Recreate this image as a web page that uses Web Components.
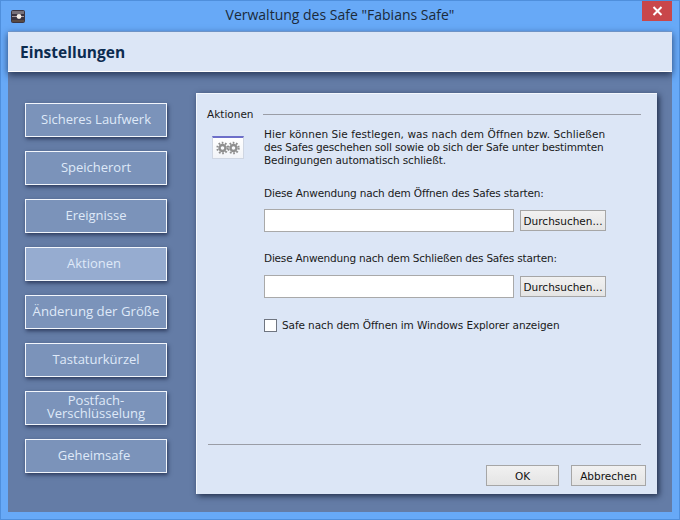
<!DOCTYPE html>
<html><head><meta charset="utf-8"><style>
html,body{margin:0;padding:0;width:680px;height:520px;overflow:hidden;background:#67a9f7}
</style></head><body>
<safe-window>
<span slot="title">Verwaltung des Safe "Fabians Safe"</span>
<span slot="heading">Einstellungen</span>
<nav-btn slot="nav">Sicheres Laufwerk</nav-btn>
<nav-btn slot="nav">Speicherort</nav-btn>
<nav-btn slot="nav">Ereignisse</nav-btn>
<nav-btn slot="nav" active style="padding-right:4px">Aktionen</nav-btn>
<nav-btn slot="nav" style="font-size:13.2px">Änderung der Größe</nav-btn>
<nav-btn slot="nav">Tastaturkürzel</nav-btn>
<nav-btn slot="nav">Postfach-<br>Verschlüsselung</nav-btn>
<nav-btn slot="nav" style="padding-right:4px">Geheimsafe</nav-btn>
<action-panel slot="panel"></action-panel>
</safe-window>
<script>
const mk=(tag,css,html)=>customElements.define(tag,class extends HTMLElement{
 connectedCallback(){if(this.shadowRoot)return;this.attachShadow({mode:'open'}).innerHTML='<style>'+css+'</style>'+html;}
});
mk('safe-window',`
:host{display:flex;flex-direction:column;width:680px;height:520px;box-sizing:border-box;border:1px solid #4f8fdc;background:#67a9f7;font-family:"Open Sans","Noto Sans",sans-serif}
.title{height:30px;display:flex;align-items:center;position:relative;flex:none}
.ticon{margin:1px 0 0 10px;width:14px;height:13px;flex:none}
.ttext{position:absolute;left:0;right:0;top:4px;text-align:center;font-size:14px;line-height:20px;color:#1b2a3a}
.close{position:absolute;right:7px;top:0;width:30px;height:20px;background:#c9474a;display:flex;align-items:center;justify-content:center}
.client{flex:1;margin:0 0 7px 7px;width:664px;display:flex;flex-direction:column;min-height:0;background:#647ca6}
.head{flex:none;height:41px;box-sizing:border-box;background:#dce6f6;border-top:1px solid #6e93c6;border-bottom:1px solid #fff;padding-left:12px;display:flex;align-items:center;font-size:15.5px;font-weight:700;color:#0c2c50;box-shadow:0 3px 7px rgba(20,35,65,.75);position:relative}
.main{flex:1;display:flex;min-height:0;padding:21px 15px 18px 17px;gap:29px}
.nav{width:142px;flex:none;display:flex;flex-direction:column;gap:14px;padding-top:10px}
`,`
<div class="title">
<svg class="ticon" viewBox="0 0 14 13"><rect width="14" height="13" rx="2" fill="#3a3440"/><rect x="1" y="1" width="12" height="3" fill="#77717a"/><rect x="1" y="6" width="12" height="1" fill="#a89aa0"/><circle cx="8" cy="6.500" r="2.400" fill="#f4efe8"/><rect x="1" y="10" width="12" height="2" fill="#5a4a42"/></svg>
<div class="ttext"><slot name="title"></slot></div>
<div class="close"><svg width="11" height="10" viewBox="0 0 11 10"><path d="M1.5 1 9.5 9M9.5 1 1.500 9" stroke="#fff" stroke-width="2"/></svg></div>
</div>
<div class="client">
<div class="head"><slot name="heading"></slot></div>
<div class="main"><div class="nav"><slot name="nav"></slot></div><slot name="panel"></slot></div>
</div>`);
mk('nav-btn',`
:host{display:flex;align-items:center;justify-content:center;text-align:center;box-sizing:border-box;width:142px;height:34px;padding-bottom:2px;border:1px solid #f2f6fc;background:#7b93ba;color:#dfe9f8;font-size:13px;line-height:13px;box-shadow:1px 2px 4px rgba(20,30,60,.7);white-space:nowrap}
:host([active]){background:#96acd0}
`,`<slot></slot>`);
mk('flat-btn',`
:host{display:flex;align-items:center;justify-content:center;box-sizing:border-box;height:21px;padding-top:1px;border:1px solid #a6a6a6;background:linear-gradient(#f1f1f1,#e4e4e4);color:#111;font:10.5px/1 "DejaVu Sans",sans-serif}
`,`<slot></slot>`);
mk('action-panel',`
:host{display:flex;flex-direction:column;flex:1;box-sizing:border-box;background:#dce6f6;box-shadow:2px 2px 6px rgba(15,25,50,.8);border-left:1px solid #f3f7fd;border-top:1px solid #f3f7fd;color:#1a1a1a;font:10.5px/13px "DejaVu Sans",sans-serif;padding:14px 11px 8px 10px}
.leg{display:flex;align-items:center;gap:9px;height:13px}
.leg i{flex:1;height:1px;background:#9a9da6;margin-right:5px}
.body{display:flex;flex:1;min-height:0}
.ic{width:32px;height:23px;margin:15px 20px 0 5px;flex:none;box-sizing:border-box;background:linear-gradient(#fff,#f2f4f8);border:1px solid #cfd6e2;border-top:2px solid #6d6fc9}
.ic svg{display:block}
.col{flex:1;display:flex;flex-direction:column;padding-top:7px;min-width:0}
.row{display:flex;gap:6px;margin-top:9px;margin-bottom:20px}
.row.b{margin-top:10px}
.in{width:250px;height:23px;box-sizing:border-box;background:#fff;border:1px solid #a9a9a9}
.row flat-btn{width:86px;margin-top:1px}
p{margin:0 0 20px}
p span{display:block;white-space:nowrap}
.lbl{margin:0;white-space:nowrap}
.ck{display:flex;align-items:center;gap:5px;margin-top:1px}
.ck b{width:13px;height:13px;box-sizing:border-box;background:#fff;border:1px solid #6f7580}
hr{border:0;height:1px;background:#9a9da6;margin:0 5px 0 1px;flex:none}
.foot{display:flex;justify-content:flex-end;gap:12px;margin:20px 0 0 0;flex:none}
.foot flat-btn{width:73px}.foot flat-btn+flat-btn{width:75px}
`,`
<div class="leg"><span>Aktionen</span><i></i></div>
<div class="body">
<div class="ic"><svg width="30" height="20" viewBox="0 0 30 20"><g fill="none" stroke="#8f8f8f"><g stroke-width="2.400"><circle cx="9.500" cy="10" r="3"/><circle cx="20.500" cy="10" r="3"/></g><g stroke-width="2" stroke-dasharray="1.700 1.600"><circle cx="9.500" cy="10" r="5.200"/><circle cx="20.500" cy="10" r="5.200"/></g></g></svg></div>
<div class="col">
<p><span style="letter-spacing:.06px">Hier können Sie festlegen, was nach dem Öffnen bzw. Schließen</span><span style="letter-spacing:-.19px">des Safes geschehen soll sowie ob sich der Safe unter bestimmten</span><span style="letter-spacing:-.12px">Bedingungen automatisch schließt.</span></p>
<div class="lbl" style="letter-spacing:-.16px">Diese Anwendung nach dem Öffnen des Safes starten:</div>
<div class="row"><div class="in"></div><flat-btn>Durchsuchen...</flat-btn></div>
<div class="lbl" style="letter-spacing:-.2px">Diese Anwendung nach dem Schließen des Safes starten:</div>
<div class="row b"><div class="in"></div><flat-btn>Durchsuchen...</flat-btn></div>
<div class="ck"><b></b><span style="letter-spacing:-.1px">Safe nach dem Öffnen im Windows Explorer anzeigen</span></div>
</div></div>
<hr>
<div class="foot"><flat-btn>OK</flat-btn><flat-btn>Abbrechen</flat-btn></div>`);
</script>
</body></html>
